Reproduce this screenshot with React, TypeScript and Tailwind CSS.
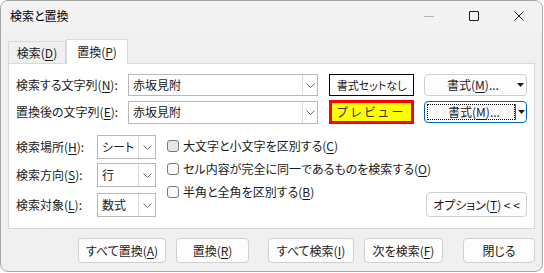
import React from "react";

const font = { fontFamily: '"Noto Sans CJK JP", "Noto Sans", sans-serif' };

function Chevron() {
  return (
    <svg width="9" height="5" viewBox="0 0 9 5" className="text-[#6b6b6b]">
      <polyline points="0.5,0.5 4.5,4.5 8.5,0.5" fill="none" stroke="currentColor" strokeWidth="1" />
    </svg>
  );
}

function Mn({ k }: { k: string }) {
  return <span className="underline underline-offset-[2px] decoration-1">{k}</span>;
}

function Combo({ value }: { value: string }) {
  return (
    <div className="flex w-[190px] h-full border border-[#b8b8b8] bg-white">
      <div className="flex-1 flex items-center pl-[4px] text-[12px]">{value}</div>
      <div className="w-[15px] border-l border-[#dadada] flex items-center justify-center">
        <Chevron />
      </div>
    </div>
  );
}

function Select({ value }: { value: string }) {
  return (
    <div className="flex w-[59px] h-[24px] border border-[#b8b8b8] bg-white">
      <div className="flex-1 flex items-center pl-[4px] text-[12px]">{value}</div>
      <div className="w-[17px] border-l border-[#dadada] flex items-center justify-center">
        <Chevron />
      </div>
    </div>
  );
}

function Check({ children, shaded }: { children: React.ReactNode; shaded?: boolean }) {
  return (
    <div className="flex items-center h-[23px] whitespace-nowrap">
      <div
        className={
          "w-[12px] h-[12px] shrink-0 rounded-[3px] border border-[#7a7a7a] " +
          (shaded ? "bg-[#e6e6e6]" : "bg-[#f8f8f8]")
        }
      />
      <span className="ml-[4px] text-[12px]">{children}</span>
    </div>
  );
}

function Btn({ w, children }: { w: string; children: React.ReactNode }) {
  return (
    <div
      className={
        w +
        " h-[25px] rounded-[4px] border border-[#d0d0d0] bg-[#fdfdfd] flex items-center justify-center text-[12px] whitespace-nowrap"
      }
    >
      {children}
    </div>
  );
}

function SplitBtn({ focused }: { focused?: boolean }) {
  return (
    <div
      className={
        "w-[103px] h-[22px] rounded-[4px] bg-[#fdfdfd] flex items-center text-[12px] " +
        (focused ? "border border-[#0067c0]" : "border border-[#d0d0d0]")
      }
    >
      <div
        className={
          "flex-1 flex items-center justify-center pl-[6px] " +
          (focused ? "ml-[2px] h-[16px] border border-dotted border-black" : "h-full")
        }
      >
        書式(<Mn k="M" />)...
      </div>
      <div className={"w-[11px] flex items-center justify-center " + (focused ? "h-[16px] border-l border-[#555]" : "h-full")}>
        <svg width="7" height="4" viewBox="0 0 7 4">
          <polygon points="0,0 7,0 3.5,4" fill="#1a1a1a" />
        </svg>
      </div>
    </div>
  );
}

export default function App() {
  return (
    <div className="w-[544px] h-[273px] bg-white overflow-hidden [font-feature-settings:'palt']" style={font}>
      <div className="w-[543px] h-[272px] border border-[#a6a6a6] rounded-[8px] bg-[#f0f0f0] overflow-hidden text-[#1a1a1a] flex flex-col">
        {/* title bar */}
        <div className="h-[30px] bg-[#f3f3f3] flex items-center pl-[9px] shrink-0">
          <span className="text-[12px] text-black">検索と置換</span>
          <div className="ml-auto flex items-center h-full">
            <div className="w-[45px] flex justify-center">
              <div className="w-[10px] h-px bg-[#b4b4b4]" />
            </div>
            <div className="w-[45px] flex justify-center">
              <div className="w-[10px] h-[10px] border border-[#1a1a1a] rounded-[1px]" />
            </div>
            <div className="w-[46px] flex justify-center">
              <svg width="10" height="10" viewBox="0 0 10 10">
                <path d="M0.5 0.5 L9.5 9.5 M9.5 0.5 L0.5 9.5" stroke="#1a1a1a" strokeWidth="1" />
              </svg>
            </div>
          </div>
        </div>

        {/* body */}
        <div className="px-[7px] pt-[8px]">
          {/* tabs */}
          <div className="flex items-end h-[24px]">
            <div className="w-[58px] h-[22px] border border-b-0 border-[#d9d9d9] bg-[#f0f0f0] flex items-center justify-center text-[12px]">
              検索(<Mn k="D" />)
            </div>
            <div className="w-[62px] h-[25px] -mb-px relative z-10 border border-b-0 border-[#d9d9d9] bg-white flex items-center justify-center text-[12px]">
              置換(<Mn k="P" />)
            </div>
          </div>

          {/* panel */}
          <div className="w-[527px] h-[166px] border border-[#d9d9d9] bg-white pl-[7px] pr-[7px] pt-[10px]">
            <div className="flex items-center h-[22px]">
              <div className="w-[112px] text-[12px]">
                検索する文字列(<Mn k="N" />):
              </div>
              <Combo value="赤坂見附" />
              <div className="ml-[11px] w-[85px] h-[22px] border border-black bg-white flex items-center justify-center text-[11px] whitespace-nowrap">
                書式セットなし
              </div>
              <div className="ml-[10px]">
                <SplitBtn />
              </div>
            </div>
            <div className="flex items-center h-[24px] mt-[4px]">
              <div className="w-[112px] text-[12px]">
                置換後の文字列(<Mn k="E" />):
              </div>
              <div className="h-[23px]">
                <Combo value="赤坂見附" />
              </div>
              <div className="ml-[11px] w-[85px] h-[24px] border-[3px] border-[#ff0000] bg-[#ffff00] flex items-center justify-center text-[12px] tracking-[3px] text-[#333]">
                プレビュー
              </div>
              <div className="ml-[10px]">
                <SplitBtn focused />
              </div>
            </div>

            <div className="flex items-end mt-[11px]">
              <div className="flex flex-col shrink-0">
                <div className="flex items-center">
                  <div className="w-[81px] text-[12px]">
                    検索場所(<Mn k="H" />):
                  </div>
                  <Select value="シート" />
                </div>
                <div className="flex items-center mt-[4px]">
                  <div className="w-[81px] text-[12px]">
                    検索方向(<Mn k="S" />):
                  </div>
                  <Select value="行" />
                </div>
                <div className="flex items-center mt-[6px]">
                  <div className="w-[81px] text-[12px]">
                    検索対象(<Mn k="L" />):
                  </div>
                  <Select value="数式" />
                </div>
              </div>
              <div className="ml-[11px] self-start flex flex-col -mt-[1px] flex-1 min-w-0">
                <Check shaded>
                  大文字と小文字を区別する(<Mn k="C" />)
                </Check>
                <Check>
                  セル内容が完全に同一であるものを検索する(<Mn k="O" />)
                </Check>
                <Check>
                  半角と全角を区別する(<Mn k="B" />)
                </Check>
              </div>
              <div className="shrink-0">
                <Btn w="w-[101px]">
                  オプション(<Mn k="T" />) &lt; &lt;
                </Btn>
              </div>
            </div>
          </div>

          {/* bottom buttons */}
          <div className="flex mt-[9px] pl-[70px]">
            <Btn w="w-[88px]">
              すべて置換(<Mn k="A" />)
            </Btn>
            <div className="ml-[10px]">
              <Btn w="w-[73px]">
                置換(<Mn k="R" />)
              </Btn>
            </div>
            <div className="ml-[19px]">
              <Btn w="w-[86px]">
                すべて検索(<Mn k="I" />)
              </Btn>
            </div>
            <div className="ml-[10px]">
              <Btn w="w-[79px]">
                次を検索(<Mn k="F" />)
              </Btn>
            </div>
            <div className="ml-[20px]">
              <Btn w="w-[72px]">閉じる</Btn>
            </div>
          </div>
        </div>
      </div>
    </div>
  );
}
